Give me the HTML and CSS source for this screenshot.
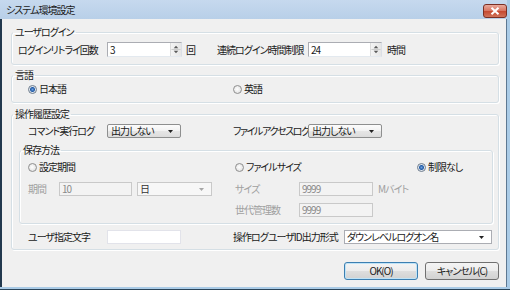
FILE: index.html
```html
<!DOCTYPE html>
<html lang="ja">
<head>
    <meta charset="UTF-8">
    <title>システム環境設定</title>
    <link rel="stylesheet" href="styles.css">
</head>
<body>
    <div class="window">
        <div class="titlebar">
            <span class="title">システム環境設定</span>
            <span class="close-btn">
                <svg width="10" height="8" viewBox="0 0 10 8"><path d="M1.5 0.8 L8.5 7.2 M8.5 0.8 L1.5 7.2" stroke="#fff" stroke-width="2"/></svg>
            </span>
        </div>

        <div class="client">
            <!-- ユーザログイン -->
            <fieldset class="group">
                <legend>ユーザログイン</legend>
                <div class="group-body body-login">
                    <div class="row">
                        <span class="lbl w-retry">ログインリトライ回数</span>
                        <span class="spin w-spin1">
                            <span class="val">3</span>
                            <span class="spin-btns">
                                <svg width="11" height="13" viewBox="0 0 11 13"><path d="M3 5 L5.5 2.5 L8 5 Z M3 8 L5.5 10.5 L8 8 Z" fill="#5a5a5a"/><path d="M0.5 6.5 H10.5" stroke="#c8c8c8"/></svg>
                            </span>
                        </span>
                        <span class="unit w-unit1">回</span>
                        <span class="lbl w-limit">連続ログイン時間制限</span>
                        <span class="spin w-spin2">
                            <span class="val">24</span>
                            <span class="spin-btns">
                                <svg width="11" height="13" viewBox="0 0 11 13"><path d="M3 5 L5.5 2.5 L8 5 Z M3 8 L5.5 10.5 L8 8 Z" fill="#5a5a5a"/><path d="M0.5 6.5 H10.5" stroke="#c8c8c8"/></svg>
                            </span>
                        </span>
                        <span class="unit w-unit2">時間</span>
                    </div>
                </div>
            </fieldset>

            <!-- 言語 -->
            <fieldset class="group group-lang">
                <legend>言語</legend>
                <div class="group-body body-lang">
                    <div class="row">
                        <span class="half-l"><span class="radio checked"></span>日本語</span>
                        <span class="half-r"><span class="radio"></span>英語</span>
                    </div>
                </div>
            </fieldset>

            <!-- 操作履歴設定 -->
            <fieldset class="group group-log">
                <legend>操作履歴設定</legend>
                <div class="group-body body-log">
                    <div class="row row-pad">
                        <span class="half-l">
                            <span class="lbl w-cmd">コマンド実行ログ</span>
                            <span class="combo w-combo">出力しない<svg class="arrow" width="5" height="3" viewBox="0 0 5 3"><path d="M0 0 H5 L2.5 3 Z" fill="#222"/></svg></span>
                        </span>
                        <span class="half-r">
                            <span class="lbl w-file">ファイルアクセスログ</span>
                            <span class="combo w-combo">出力しない<svg class="arrow" width="5" height="3" viewBox="0 0 5 3"><path d="M0 0 H5 L2.5 3 Z" fill="#222"/></svg></span>
                        </span>
                    </div>

                    <fieldset class="group group-save">
                        <legend>保存方法</legend>
                        <div class="group-body body-save">
                            <div class="row">
                                <span class="half-l2"><span class="radio"></span>設定期間</span>
                                <span class="half-r2"><span class="radio"></span>ファイルサイズ</span>
                                <span class="half-x"><span class="radio checked"></span>制限なし</span>
                            </div>
                            <div class="row row-b">
                                <span class="half-l2">
                                    <span class="lbl w-period off">期間</span>
                                    <span class="textbox disabled w-period-in">10</span>
                                    <span class="edit-combo disabled w-day">日<svg class="arrow" width="5" height="3" viewBox="0 0 5 3"><path d="M0 0 H5 L2.5 3 Z" fill="#a6a6a6"/></svg></span>
                                </span>
                                <span class="half-r2">
                                    <span class="lbl w-size off">サイズ</span>
                                    <span class="textbox disabled w-size-in">9999</span>
                                    <span class="unit off w-mb">Mバイト</span>
                                </span>
                            </div>
                            <div class="row row-c">
                                <span class="half-l2"></span>
                                <span class="half-r2">
                                    <span class="lbl w-size off">世代管理数</span>
                                    <span class="textbox disabled w-size-in">9999</span>
                                </span>
                            </div>
                        </div>
                    </fieldset>

                    <div class="row row-pad row-user">
                        <span class="half-l">
                            <span class="lbl w-cmd">ユーザ指定文字</span>
                            <span class="textbox blank w-combo"></span>
                        </span>
                        <span class="half-r">
                            <span class="lbl w-uid">操作ログユーザID出力形式</span>
                            <span class="edit-combo w-uid-in">ダウンレベルログオン名<svg class="arrow" width="5" height="3" viewBox="0 0 5 3"><path d="M0 0 H5 L2.5 3 Z" fill="#222"/></svg></span>
                        </span>
                    </div>
                </div>
            </fieldset>

            <div class="button-row">
                <span class="btn btn-default">OK(O)</span>
                <span class="btn">キャンセル(C)</span>
            </div>
        </div>
    </div>
</body>
</html>
```

FILE: styles.css
```css
* {
    box-sizing: border-box;
}
body {
    margin: 0;
    font-family: "Noto Sans CJK JP", "Noto Sans", sans-serif;
    font-size: 10px;
    line-height: 12px;
    letter-spacing: -1px;
    color: #1a1a1a;
    font-feature-settings: "palt" 1;
}
.window {
    width: 510px;
    height: 290px;
    display: flex;
    flex-direction: column;
    padding: 0 3px 2px 0;
    background-color: #aacbe6;
    border-bottom: 1px solid #2a4458;
}
.titlebar {
    height: 19px;
    flex: none;
    display: flex;
    align-items: center;
    justify-content: space-between;
    padding-left: 6px;
    background: linear-gradient(#c6d9ee, #b8cfe8);
}
.close-btn {
    width: 24px;
    height: 14px;
    margin-top: 2px;
    display: flex;
    align-items: center;
    justify-content: center;
    border: 1px solid #7a2f24;
    border-radius: 3px;
    background: linear-gradient(#e9a99b, #d7735f 50%, #c5482f 51%, #d0735a);
}
.client {
    flex: 1;
    display: flex;
    flex-direction: column;
    padding: 7px 7px 0 9px;
    background-color: #f0f0f0;
    border-left: 2px solid #22394e;
    border-right: 1px solid #5d7891;
}

/* group boxes */
.group {
    margin: 0;
    padding: 0;
    min-width: 0;
    border: 1px solid #d5dfe5;
    border-radius: 3px;
    box-shadow: inset 1px 1px 0 #fff, 1px 1px 0 #fff;
}
.group legend {
    margin-left: 1px;
    padding: 0 2px;
    line-height: 12px;
}
.group-lang {
    margin-top: 4px;
}
.group-log {
    margin-top: 5px;
}
.group-save {
    margin-top: 6px;
}
.body-login {
    padding: 4px 6px 7px 6px;
}
.body-login .row {
    height: 15px;
}
.body-lang {
    padding: 1px 6px 6px 16px;
}
.body-log {
    padding: 4px 5px 5px 7px;
}
.body-save {
    padding: 4px 6px 6px 8px;
}

.row {
    display: flex;
    align-items: center;
    height: 14px;
}
.row-pad {
    padding-left: 9px;
}
.row-b {
    margin-top: 8px;
}
.row-c {
    margin-top: 7px;
}
.row-user {
    margin-top: 6px;
}
.half-l {
    width: 205px;
    flex: none;
    display: flex;
    align-items: center;
}
.half-r {
    display: flex;
    align-items: center;
}
.half-l2 {
    width: 207px;
    flex: none;
    display: flex;
    align-items: center;
}
.half-r2 {
    width: 182px;
    flex: none;
    display: flex;
    align-items: center;
}
.half-x {
    display: flex;
    align-items: center;
}

.lbl {
    flex: none;
    white-space: nowrap;
}
.off {
    color: #a0a0a0;
}
.w-retry { width: 89px; }
.w-limit { width: 91px; }
.w-cmd { width: 79px; }
.w-file {
    width: 75px;
    letter-spacing: -1.4px;
}
.w-uid { width: 111px; }
.w-period { width: 31px; }
.w-size { width: 64px; }
.unit {
    flex: none;
}
.w-unit1 {
    width: 31px;
    margin-left: 4px;
}
.w-unit2 {
    margin-left: 5px;
}
.w-mb {
    margin-left: 5px;
}

/* inputs */
.spin {
    display: flex;
    align-items: center;
    justify-content: space-between;
    height: 15px;
    flex: none;
    padding-left: 2px;
    border: 1px solid #abadb3;
    border-right-color: #dbdfe6;
    border-bottom-color: #e3e9ef;
    background-color: #fff;
}
.w-spin1 { width: 75px; }
.w-spin2 { width: 74px; }
.spin-btns {
    display: flex;
    width: 11px;
    height: 13px;
    border-left: 1px solid #dcdcdc;
    background: linear-gradient(90deg, #f4f4f4, #e6e6e6);
}
.textbox {
    height: 14px;
    flex: none;
    padding-left: 2px;
    border: 1px solid #abadb3;
    background-color: #fff;
    line-height: 12px;
}
.textbox.blank {
    border-color: #e2e3ea;
}
.textbox.disabled {
    border-color: #c9c9c9;
    background-color: #f3f3f3;
    color: #8a8a8a;
}
.w-combo { width: 74px; }
.w-period-in { width: 73px; }
.w-size-in { width: 74px; }
.w-day {
    width: 75px;
    margin-left: 5px;
}
.w-uid-in { width: 148px; }

.combo,
.edit-combo {
    height: 14px;
    flex: none;
    display: flex;
    align-items: center;
    justify-content: space-between;
    padding: 0 7px 0 3px;
    white-space: nowrap;
}
.combo {
    border: 1px solid #8e8f8f;
    border-radius: 2px;
    background: linear-gradient(#fcfcfc, #f2f2f2 50%, #e6e6e6 51%, #dcdcdc);
}
.edit-combo {
    border: 1px solid #abadb3;
    background-color: #fff;
    padding-left: 2px;
}
.edit-combo.disabled {
    border-color: #c9c9c9;
    background-color: #f7f7f7;
    color: #333;
}

/* radio buttons */
.radio {
    width: 9px;
    height: 9px;
    flex: none;
    margin-right: 2px;
    border: 1px solid #8f8f8f;
    border-radius: 50%;
    background: radial-gradient(circle at 45% 45%, #fff, #d9d9d9);
}
.radio.checked {
    border-color: #6c7b8c;
    background: radial-gradient(circle, #6fa1e0 0, #235ca6 2px, #dfe6ee 3px, #fff 4.5px);
}

/* buttons */
.button-row {
    display: flex;
    justify-content: flex-end;
    gap: 7px;
    margin-top: 12px;
}
.btn {
    width: 74px;
    height: 18px;
    border: 1px solid #707070;
    border-radius: 3px;
    background: linear-gradient(#f4f4f4, #ececec 50%, #dedede 51%, #d2d2d2);
    text-align: center;
    line-height: 16px;
}
.btn-default {
    border-color: #3c7fb1;
    box-shadow: inset 0 0 0 1px #bfe3f7;
}
```
